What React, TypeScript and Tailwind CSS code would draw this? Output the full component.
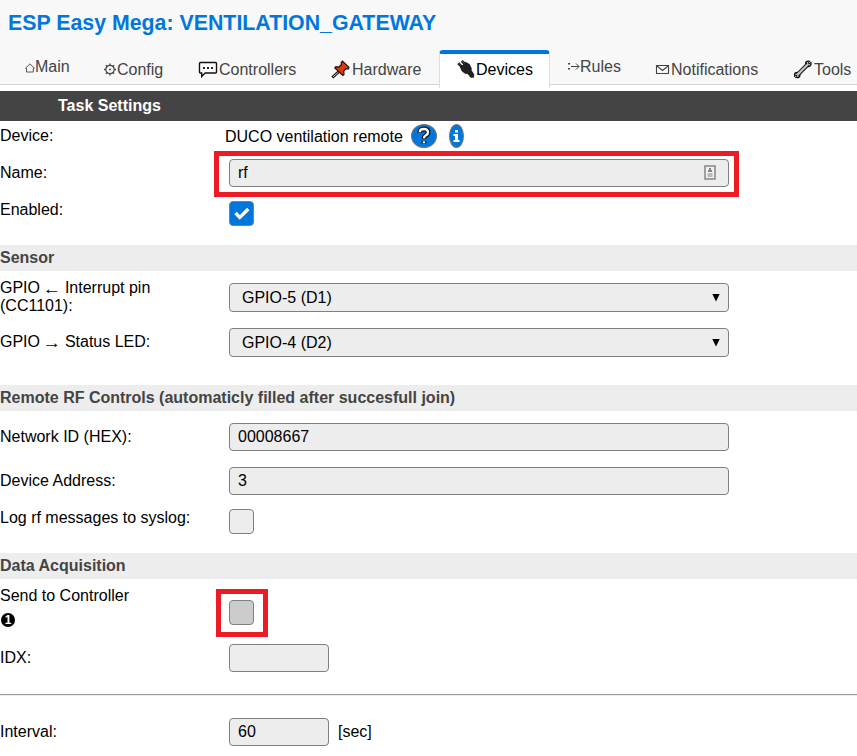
import React from "react";

const HomeIcon = () => (
  <svg className="mt-px h-[18px] w-[11px] shrink-0" viewBox="0 0 11 18" fill="none" stroke="#444" strokeWidth="0.9">
    <path d="M1.500 9.200 6 4.800 10.300 9.200H9.300V13H2.500V9.200Z" />
  </svg>
);

const GearIcon = () => (
  <svg className="-mt-px h-[18px] w-[14px] shrink-0" viewBox="0 0 14 18" fill="none" stroke="#444">
    <circle cx="7" cy="9.5" r="4.2" strokeWidth="1.2" />
    <circle cx="7" cy="9.5" r="0.9" fill="#444" stroke="none" />
    <path d="M7 3.6v1.6M7 13.8v1.6M1 9.5h1.8M11.2 9.5H13M2.8 5.3 4 6.5M10 12.5l1.2 1.2M11.2 5.3 10 6.5M4 12.5l-1.2 1.2" strokeWidth="1.3" />
  </svg>
);

const ChatIcon = () => (
  <svg className="-mt-px h-[18px] w-[21px] shrink-0" viewBox="0 0 21 18" fill="none">
    <path d="M2.500 2.500h15a1 1 0 0 1 1 1v8.500a1 1 0 0 1-1 1H7.200L3.700 16.500V13H2.500a1 1 0 0 1-1-1V3.500a1 1 0 0 1 1-1Z" fill="#fff" stroke="#111" strokeWidth="1.4" />
    <path d="M5 7h2v2H5zM9 7h2v2H9zM13 7h2v2h-2z" fill="#222" />
  </svg>
);

const PinIcon = () => (
  <svg className="-mt-px h-[19px] w-[21px] shrink-0" viewBox="0 0 21 19">
    <path d="M8 11.500 1.300 17.500" stroke="#111" strokeWidth="3" />
    <path d="M7.500 12 2 16.900" stroke="#ccc" strokeWidth="1" />
    <path d="M11.500 1.200 18 7.400 17.200 9 14.800 8.700 12.700 11.300 13 14.400 11.800 15.500 3.800 8 4.900 6.700 8 7 10.400 4.500 10.200 2.500Z" fill="#df3a05" stroke="#151515" strokeWidth="1.200" />
  </svg>
);

const PlugIcon = () => (
  <svg className="-mt-px h-[18px] w-[19px] shrink-0" viewBox="0 0 19 18">
    <path d="M1.200 3.300 5 7M4.700 1 8.500 4.500" stroke="#151515" strokeWidth="2.600" />
    <path d="M3.500 7.500 8.700 2.300 12.300 4.300 14.300 8.300 14.200 10.300 16.700 14.200V17.300H13.600L11 13.800 8 13.300 5 11Z" fill="#202020" stroke="#111" strokeWidth="0.700" />
    <path d="M1.500 3.300 4 5.800M5 1.100l2.600 2.500" stroke="#777" strokeWidth="0.700" />
  </svg>
);

const RulesIcon = () => (
  <svg className="-mt-px h-[18px] w-[14px] shrink-0" viewBox="0 0 14 18" fill="none" stroke="#444">
    <path d="M5 9.500h8M10 6.500l3 3-3 3" strokeWidth="1" />
    <path d="M2 6h2v1.500H2zM2 11h2v1.500H2z" fill="#444" stroke="none" />
  </svg>
);

const MailIcon = () => (
  <svg className="-mt-px h-[18px] w-[16px] shrink-0" viewBox="0 0 16 18" fill="none" stroke="#444">
    <path d="M1.500 5.500h12v8h-12ZM2 6l5.500 4.500L13 6" strokeWidth="1.100" />
  </svg>
);

const WrenchIcon = () => (
  <svg className="-mt-px h-[19px] w-[21px] shrink-0" viewBox="0 0 21 19">
    <g stroke="#111" fill="#c8c8c8" strokeWidth="1.300">
      <circle cx="15.300" cy="3.900" r="2.700" />
      <circle cx="4.200" cy="15" r="2.700" />
    </g>
    <path d="m4.500 14.700 10.500-10.500" stroke="#111" strokeWidth="4.200" />
    <path d="m4.300 14.900 10.900-10.900" stroke="#c4c4c4" strokeWidth="2.200" />
    <path d="m15.500 3.700 2.300-2.300M3.900 15.300l-2.300 2.300" stroke="#111" strokeWidth="2" />
    <path d="m16.300 2.900 2.200-2.200M3.100 16.100.900 18.300" stroke="#f8f8f8" strokeWidth="1" />
  </svg>
);

const Arrow = ({ children }: { children: React.ReactNode }) => (
  <span className="inline-block translate-y-px scale-x-115">{children}</span>
);

const Tab = ({ className, icon, children }: { className: string; icon: React.ReactNode; children: React.ReactNode }) => (
  <div className={`flex shrink-0 whitespace-nowrap ${className}`}>
    {icon}
    <span>{children}</span>
  </div>
);

const Section = ({ children }: { children: React.ReactNode }) => (
  <h3 className="h-[26px] shrink-0 bg-[#ededed] pt-[4px] font-bold text-[#444]">{children}</h3>
);

const Row = ({ className, label, labelClass, children }: { className: string; label: React.ReactNode; labelClass: string; children: React.ReactNode }) => (
  <div className={`flex items-start ${className}`}>
    <div className={`w-[229px] shrink-0 ${labelClass}`}>{label}</div>
    {children}
  </div>
);

const Field = ({ className, children }: { className: string; children?: React.ReactNode }) => (
  <div className={`flex h-7 shrink-0 justify-between rounded-[4px] border border-[#808080] bg-[#ededed] pt-[4px] pl-2 ${className}`}>{children}</div>
);

const Select = ({ children }: { children: React.ReactNode }) => (
  <div className="flex h-[29px] w-[500px] justify-between rounded-[4px] border border-[#808080] bg-[#ededed] pt-[5px] pr-[8px] pl-3">
    <span>{children}</span>
    <svg className="mt-[5px] h-[8px] w-[8px]" viewBox="0 0 8 8">
      <path d="M0.300 0h7.400L4 7.500Z" fill="#000" />
    </svg>
  </div>
);

const CHECKBOX = "flex size-[25px] shrink-0 items-center justify-center rounded-[4px] border border-[#808080]";

export default function App() {
  return (
    <div className="h-[756px] w-[857px] overflow-hidden bg-white font-['Liberation_Sans',Arial,sans-serif] text-[16px] leading-[18px] text-black">
      <header className="h-[85px] border-b border-[#d5d5d5] bg-[#f8f8f8]">
        <h1 className="h-[50px] pt-[11px] pl-[8px] text-[21.33px] leading-[24px] font-bold whitespace-nowrap text-[#0077dd]">ESP Easy Mega: VENTILATION_GATEWAY</h1>
        <nav className="flex h-[38px] text-[#444]">
          <Tab className="ml-[24px] w-[79px] pt-[8px]" icon={<HomeIcon />}>Main</Tab>
          <Tab className="w-[95px] pt-[11px]" icon={<GearIcon />}>Config</Tab>
          <Tab className="w-[133px] pt-[11px]" icon={<ChatIcon />}>Controllers</Tab>
          <Tab className="w-[108px] pt-[11px]" icon={<PinIcon />}>Hardware</Tab>
          <Tab className="w-[111px] rounded-t-[4px] border-x border-t-4 border-x-[#ddd] border-t-[#0077dd] bg-white pt-[7px] pl-[17px] text-black" icon={<PlugIcon />}>Devices</Tab>
          <Tab className="ml-[16px] w-[89px] pt-[8px]" icon={<RulesIcon />}>Rules</Tab>
          <Tab className="w-[138px] pt-[11px]" icon={<MailIcon />}>Notifications</Tab>
          <Tab className="pt-[11px]" icon={<WrenchIcon />}>Tools</Tab>
        </nav>
      </header>
      <h2 className="mt-[6px] h-[30px] bg-[#444] pt-[6px] pl-[58px] font-bold text-white">Task Settings</h2>

      <Row className="h-[38px]" labelClass="pt-[6px]" label="Device:">
        <div className="-ml-1 flex pt-[3px]">
          <span className="w-[186px] pt-[4px]">DUCO ventilation remote</span>
          <span className="flex h-[24px] w-[26px] items-center justify-center rounded-[50%] border border-[#777] bg-[#0077dd]">
            <svg className="h-[20px] w-[16px]" viewBox="0 0 16 20" fill="none">
              <path d="M3.800 6.700Q3.800 3 8 3Q12 3 12 6.300Q12 8.300 10 9.300Q8 10.300 8 12.700M8 14.800v2.700" stroke="#111" strokeWidth="4.800" />
              <path d="M3.800 6.200Q3.800 3 8 3Q12 3 12 6.300Q12 8.300 10 9.300Q8 10.300 8 12.200M8 15.300v2" stroke="#fff" strokeWidth="2.400" />
            </svg>
          </span>
          <span className="ml-[12px] flex h-[24px] w-[15px] items-center justify-center rounded-[50%] border border-[#777] bg-[#0077dd]">
            <svg className="h-[12px] w-[7px]" viewBox="0 0 7 12" fill="#fff">
              <path d="M2 0h3v2.500H2zM0.500 4H5v6h1.500v2h-6v-2H2V6H0.500z" />
            </svg>
          </span>
        </div>
      </Row>
      <Row className="h-[42px]" labelClass="pt-[5px]" label="Name:">
        <div className="relative">
          <Field className="w-[500px] pr-[12px]">
            <span>rf</span>
            <svg className="mt-[1px] h-[15px] w-[12px]" viewBox="0 0 12 15">
              <rect x="1" y="1" width="10" height="13" fill="#f0f0f0" stroke="#8c8c8c" strokeWidth="1.600" />
              <path d="M5 3h2v2h1v2H4V5h1zM3.500 8.500h5v1h-5zM3.500 10.500h5v1h-5z" fill="#858585" />
            </svg>
          </Field>
          <div className="absolute -top-[8px] -left-[15px] h-[46px] w-[525px] border-[5px] border-[#ed1c24]" />
        </div>
      </Row>
      <Row className="h-[44px]" labelClass="" label="Enabled:">
        <div className={`${CHECKBOX} bg-[#0077dd]`}>
          <svg className="h-[14px] w-[16px]" viewBox="0 0 16 14" fill="none">
            <path d="m1.500 6 4.300 4.500L14.300 2" stroke="#fff" strokeWidth="3.300" />
          </svg>
        </div>
      </Row>

      <Section>Sensor</Section>
      <Row className="h-[57px] pt-[12px]" labelClass="-mt-[4px]" label={<>GPIO <Arrow>←</Arrow> Interrupt pin<br />(CC1101):</>}>
        <Select>GPIO-5 (D1)</Select>
      </Row>
      <Row className="h-[57px]" labelClass="pt-[5px]" label={<>GPIO <Arrow>→</Arrow> Status LED:</>}>
        <Select>GPIO-4 (D2)</Select>
      </Row>

      <Section>Remote RF Controls (automaticly filled after succesfull join)</Section>
      <Row className="h-[56px] pt-[12px]" labelClass="pt-[5px]" label="Network ID (HEX):">
        <Field className="w-[500px]">00008667</Field>
      </Row>
      <Row className="h-[42px]" labelClass="pt-[5px]" label="Device Address:">
        <Field className="w-[500px]">3</Field>
      </Row>
      <Row className="h-[44px]" labelClass="" label="Log rf messages to syslog:">
        <div className={`${CHECKBOX} bg-[#ededed]`} />
      </Row>

      <Section>Data Acquisition</Section>
      <Row
        className="h-[65px] pt-[7px]"
        labelClass="pt-px"
        label={
          <>
            Send to Controller
            <div className="mt-[8px] ml-px flex size-[14px] items-center justify-center rounded-full bg-black text-[12px] leading-none font-bold text-white">1</div>
          </>
        }
      >
        <div className="relative mt-[14px]">
          <div className={`${CHECKBOX} bg-[#ccc]`} />
          <div className="absolute -top-[11px] -left-[13px] h-[48px] w-[52px] border-[5px] border-[#ed1c24]" />
        </div>
      </Row>
      <Row className="h-[50px]" labelClass="pt-[5px]" label="IDX:">
        <Field className="w-[100px]" />
      </Row>
      <hr className="h-[2px] border-t border-b border-t-[#9a9a9a] border-b-[#eee]" />
      <Row className="h-[50px] pt-[22px]" labelClass="pt-[5px]" label="Interval:">
        <Field className="w-[100px]">60</Field>
        <span className="ml-[9px] pt-[5px]">[sec]</span>
      </Row>
    </div>
  );
}
